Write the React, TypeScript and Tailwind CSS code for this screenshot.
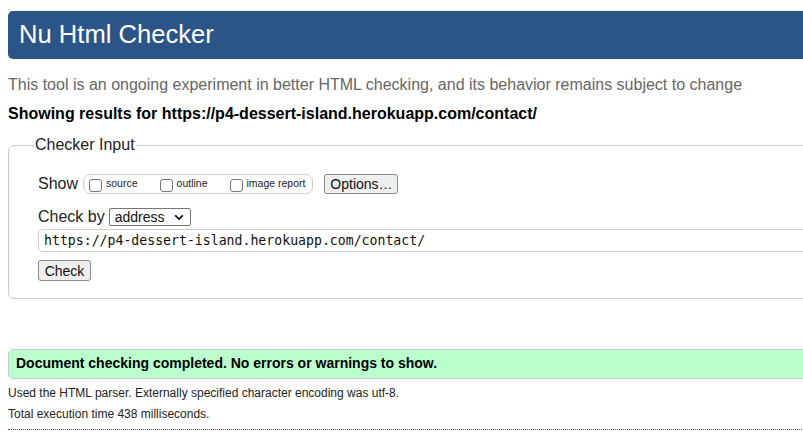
import React from "react";

function Box() {
  return (
    <span className="inline-block w-[13px] h-[13px] border border-[#767676] rounded-[3px] bg-white mr-[4px] translate-y-[1px]" />
  );
}

export default function App() {
  return (
    <div className="w-[803px] h-[441px] overflow-hidden bg-white" style={{ fontFamily: '"Liberation Sans", Arial, sans-serif' }}>
      <div className="w-[1000px] pt-[11px] pl-[8px]">
        <div className="h-[48px] bg-[#2c5587] rounded-l-[5px] flex items-center pl-[11px]">
          <h1 className="text-white text-[25.6px] leading-none">Nu Html Checker</h1>
        </div>
        <p className="mt-[16px] text-[16px] leading-[20px] text-[#666]">
          This tool is an ongoing experiment in better HTML checking, and its behavior remains subject to change
        </p>
        <p className="mt-[9px] text-[16px] leading-[20px] font-bold text-[#000]">
          Showing results for https://p4-dessert-island.herokuapp.com/contact/
        </p>
        <fieldset className="mt-[9px] border border-[#ccc] rounded-l-[6px] pl-[29px] pr-0 pb-[15px] pt-[10px]">
          <legend className="text-[16px] px-[1px] ml-[-4px] text-[#222]">Checker Input</legend>
          <div className="flex items-center h-[24px] mt-[5px] text-[16px] text-[#222]">
            <span>Show</span>
            <span className="ml-[5px] flex items-center h-[20px] border border-[#ccc] rounded-[7px] pl-[5px] pr-[7px] text-[10.5px] text-[#222]">
              <label className="flex items-center"><Box />source</label>
              <label className="flex items-center ml-[22px]"><Box />outline</label>
              <label className="flex items-center ml-[22px]"><Box />image report</label>
            </span>
            <button className="ml-[11px] h-[20px] w-[74px] border border-[#8a8a8a] rounded-[3px] bg-[#efefef] text-[14px] leading-none text-[#111]">Options…</button>
          </div>
          <div className="flex items-center mt-[12px] h-[18px] text-[16px] text-[#222]">
            <span>Check by</span>
            <span className="ml-[4px] w-[82px] h-[18px] border border-[#767676] rounded-[2px] bg-white flex items-center justify-between pl-[5px] pr-[6px] text-[14px] text-[#111]">
              <span>address</span>
              <svg width="10" height="7" viewBox="0 0 10 7"><path d="M1.2 1.3l3.8 3.8 3.8-3.8" stroke="#111" strokeWidth="1.8" fill="none" /></svg>
            </span>
          </div>
          <div className="mt-[3px] h-[23px] border border-[#ccc] rounded-l-[5px] flex items-center pl-[5px] text-[13.2px] text-[#111]" style={{ fontFamily: '"DejaVu Sans Mono", monospace' }}>
            https://p4-dessert-island.herokuapp.com/contact/
          </div>
          <button className="mt-[8px] h-[21px] w-[53px] border border-[#8a8a8a] rounded-[3px] bg-[#efefef] text-[14px] leading-none text-[#111]">Check</button>
        </fieldset>
        <div className="mt-[50px] h-[30px] bg-[#bfc] border border-[#ccc] rounded-l-[5px] flex items-center pl-[7px]">
          <span className="text-[14px] font-bold text-[#000]">Document checking completed. No errors or warnings to show.</span>
        </div>
        <p className="mt-[6px] text-[12px] leading-[16px] text-[#222]">Used the HTML parser. Externally specified character encoding was utf-8.</p>
        <p className="mt-[5px] text-[12px] leading-[16px] text-[#222]">Total execution time 438 milliseconds.</p>
        <div className="mt-[7px] border-t border-dotted border-[#555]" />
      </div>
    </div>
  );
}
